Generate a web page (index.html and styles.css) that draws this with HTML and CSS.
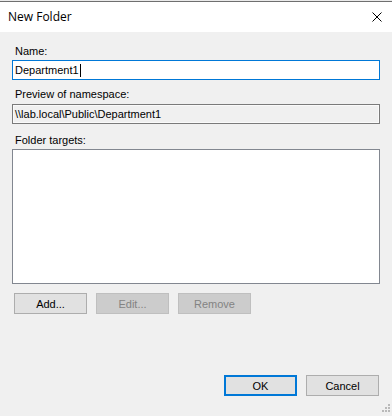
FILE: index.html
```html
<!DOCTYPE html>
<html lang="en">
<head>
  <meta charset="UTF-8" />
  <meta name="viewport" content="width=device-width, initial-scale=1.0" />
  <title>New Folder</title>
  <link rel="stylesheet" href="styles.css">
</head>
<body>
  <div class="dialog">
    <div class="top-strip"></div>
    <div class="title-bar">
      <span class="title">New Folder</span>
      <svg class="close" width="10" height="10" viewBox="0 0 10 10">
        <path d="M0.5 0.5 L9.5 9.5 M9.5 0.5 L0.5 9.5" stroke="#000" stroke-width="1" fill="none" />
      </svg>
    </div>

    <div class="content">
      <label class="field-label name-label">Name:</label>
      <div class="text-box active">Department1<span class="caret"></span></div>

      <label class="field-label preview-label">Preview of namespace:</label>
      <div class="text-box readonly">\\lab.local\Public\Department1</div>

      <label class="field-label targets-label">Folder targets:</label>
      <div class="list-box"></div>

      <div class="button-row">
        <button class="btn">Add...</button>
        <button class="btn" disabled>Edit...</button>
        <button class="btn" disabled>Remove</button>
      </div>

      <div class="spacer"></div>

      <div class="button-row footer">
        <button class="btn default">OK</button>
        <button class="btn">Cancel</button>
      </div>
    </div>

    <svg class="grip" width="10" height="10" viewBox="0 0 10 10">
      <rect x="7" y="0" width="2" height="2" fill="#b9b9b9" />
      <rect x="4" y="3" width="2" height="2" fill="#b9b9b9" />
      <rect x="7" y="3" width="2" height="2" fill="#b9b9b9" />
      <rect x="1" y="6" width="2" height="2" fill="#b9b9b9" />
      <rect x="4" y="6" width="2" height="2" fill="#b9b9b9" />
      <rect x="7" y="6" width="2" height="2" fill="#b9b9b9" />
    </svg>
  </div>
</body>
</html>
```

FILE: styles.css
```css
* {
  box-sizing: border-box;
  margin: 0;
  padding: 0;
}
body {
  background-color: #f0f0f0;
  font-family: 'Liberation Sans', Arial, sans-serif;
  font-size: 11px;
  color: #000;
}
.dialog {
  position: relative;
  width: 392px;
  height: 416px;
  display: flex;
  flex-direction: column;
  overflow: hidden;
}
.top-strip {
  height: 2px;
  background-color: #fff;
  border-top: 1px solid #eaeaea;
  border-bottom: 1px solid #6f6f6f;
}
.title-bar {
  height: 30px;
  background-color: #fff;
  display: flex;
  align-items: center;
  justify-content: space-between;
  padding: 0 10px 0 8px;
}
.title {
  font-family: 'Open Sans', 'Noto Sans', sans-serif;
  font-size: 12px;
  color: #000;
  padding-bottom: 1px;
}
.close {
  display: block;
}
.content {
  flex: 1;
  display: flex;
  flex-direction: column;
  padding: 13px 12px 20px 12px;
}
.field-label {
  display: block;
  height: 13px;
  line-height: 13px;
  padding-left: 3px;
  margin-bottom: 2px;
}
.preview-label {
  margin-top: 8px;
  margin-bottom: 3px;
}
.targets-label {
  margin-top: 10px;
  margin-bottom: 2px;
}
.text-box {
  height: 20px;
  line-height: 18px;
  padding-left: 2px;
  border: 1px solid #7a7a7a;
  display: flex;
  align-items: center;
  white-space: nowrap;
}
.text-box.active {
  background-color: #fff;
  border-color: #0078d7;
}
.text-box.readonly {
  background-color: #f0f0f0;
  box-shadow: inset 0 0 0 1px #fafafa;
}
.caret {
  display: inline-block;
  width: 1px;
  height: 13px;
  margin-left: 1px;
  background-color: #000;
}
.list-box {
  height: 135px;
  background-color: #fff;
  border: 1px solid #828790;
}
.button-row {
  display: flex;
  gap: 9px;
  padding-left: 2px;
  margin-top: 9px;
}
.footer {
  justify-content: flex-end;
  padding-left: 0;
  padding-right: 1px;
  margin-top: 0;
}
.spacer {
  flex: 1;
}
.btn {
  width: 73px;
  height: 21px;
  font-family: 'Liberation Sans', Arial, sans-serif;
  font-size: 11px;
  color: #000;
  background-color: #e1e1e1;
  border: 1px solid #adadad;
}
.btn:disabled {
  color: #838383;
  background-color: #cccccc;
  border-color: #bfbfbf;
}
.btn.default {
  border: 2px solid #0078d7;
}
.grip {
  position: absolute;
  right: 1px;
  bottom: 2px;
}
```
